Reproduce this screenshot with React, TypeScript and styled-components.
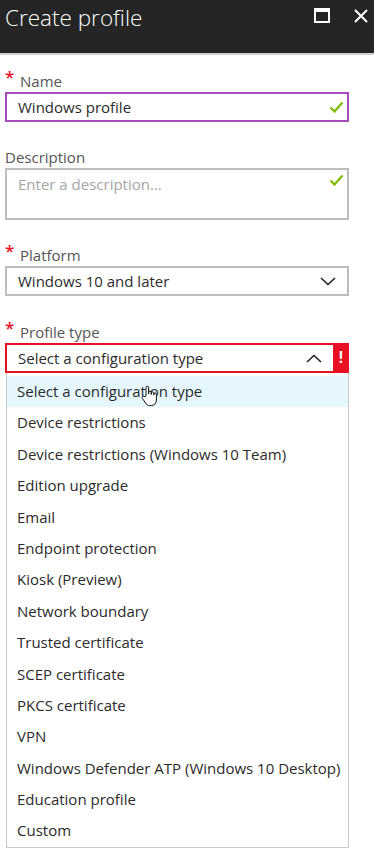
import React from "react";
import styled, { createGlobalStyle } from "styled-components";

const GlobalStyle = createGlobalStyle`
  html, body {
    margin: 0;
    padding: 0;
    background: #ffffff;
  }
  body {
    font-family: "Open Sans", "Liberation Sans", sans-serif;
    color: #333333;
  }
`;

const options = [
  "Select a configuration type",
  "Device restrictions",
  "Device restrictions (Windows 10 Team)",
  "Edition upgrade",
  "Email",
  "Endpoint protection",
  "Kiosk (Preview)",
  "Network boundary",
  "Trusted certificate",
  "SCEP certificate",
  "PKCS certificate",
  "VPN",
  "Windows Defender ATP (Windows 10 Desktop)",
  "Education profile",
  "Custom",
];

const CheckIcon = () => (
  <svg width="15" height="12" viewBox="0 0 15 12">
    <path d="M1.5 6.5 L5.5 10.5 L13.5 1.5" fill="none" stroke="#7fba00" strokeWidth="2.2" />
  </svg>
);

const Chevron = ({ up }: { up?: boolean }) => (
  <svg width="16" height="9" viewBox="0 0 16 9">
    <path
      d={up ? "M1 8 L8 1.5 L15 8" : "M1 1 L8 7.5 L15 1"}
      fill="none"
      stroke="#222"
      strokeWidth="1.6"
    />
  </svg>
);

const HandCursor = () => (
  <svg width="18" height="22" viewBox="0 0 18 22">
    <path
      d="M5 11 V2.5 a1.3 1.3 0 0 1 2.6 0 V9 V7.5 a1.3 1.3 0 0 1 2.6 0 V9.5 V8.3 a1.3 1.3 0 0 1 2.6 0 V10 V9.3 a1.3 1.3 0 0 1 2.6 0 V15 c0 3 -2 5.5 -5 5.5 H8.5 c-2 0 -3 -1 -4 -2.5 L1.3 13.2 a1.3 1.3 0 0 1 2 -1.6 Z"
      fill="#fff"
      stroke="#111"
      strokeWidth="1"
      strokeLinejoin="round"
    />
  </svg>
);

const App = () => {
  return (
    <>
      <GlobalStyle />
      <Header>
        <Title>Create profile</Title>
        <HeaderIcons>
          <MaximizeIcon />
          <svg width="14" height="14" viewBox="0 0 14 14">
            <path d="M1 1 L13 13 M13 1 L1 13" stroke="#fff" strokeWidth="2" />
          </svg>
        </HeaderIcons>
      </Header>
      <Body>
        <Field $gap={13}>
          <Label $required>
            <Star>*</Star>Name
          </Label>
          <TextBox $focused>
            <Value>Windows profile</Value>
            <CheckIcon />
          </TextBox>
        </Field>
        <Field>
          <Label>Description</Label>
          <TextArea>
            <Placeholder>Enter a description...</Placeholder>
            <CheckIcon />
          </TextArea>
        </Field>
        <Field>
          <Label $required>
            <Star>*</Star>Platform
          </Label>
          <TextBox>
            <Value>Windows 10 and later</Value>
            <ChevronWrap>
              <Chevron />
            </ChevronWrap>
          </TextBox>
        </Field>
        <Field $gap={23}>
          <Label $required>
            <Star>*</Star>Profile type
          </Label>
          <ErrorSelect>
            <ErrorInner>
              <Value>Select a configuration type</Value>
              <ChevronWrap>
                <Chevron up />
              </ChevronWrap>
            </ErrorInner>
            <ErrorBadge>!</ErrorBadge>
          </ErrorSelect>
          <DropList>
            {options.map((o, i) => (
              <Option key={o} $hover={i === 0}>
                {o}
                {i === 0 && (
                  <CursorSpot>
                    <HandCursor />
                  </CursorSpot>
                )}
              </Option>
            ))}
          </DropList>
        </Field>
      </Body>
    </>
  );
};

const Header = styled.header`
  display: flex;
  align-items: flex-start;
  justify-content: space-between;
  height: 53px;
  background-color: #252525;
  border-bottom: 2px solid #cfcfcf;
  padding: 0 5px 0 5px;
`;

const Title = styled.h1`
  margin: 0;
  font-family: "Open Sans", "Liberation Sans", sans-serif;
  font-weight: 300;
  font-size: 22.5px;
  line-height: 35px;
  color: #ffffff;
`;

const HeaderIcons = styled.div`
  display: flex;
  align-items: center;
  gap: 24px;
  padding-top: 8px;
  padding-right: 1px;
`;

const MaximizeIcon = styled.span`
  display: block;
  width: 12px;
  height: 9px;
  border: 2px solid #ffffff;
  border-top-width: 4px;
`;

const Body = styled.div`
  width: 344px;
  padding-left: 5px;
`;

const Field = styled.div<{ $gap?: number }>`
  display: flex;
  flex-direction: column;
  margin-top: ${(p) => p.$gap ?? 22}px;
`;

const Label = styled.div<{ $required?: boolean }>`
  position: relative;
  height: 22px;
  line-height: 22px;
  padding-top: 2px;
  padding-left: ${(p) => (p.$required ? "15px" : "0")};
  font-size: 15px;
  color: #555555;
`;

const Star = styled.span`
  position: absolute;
  left: 0;
  top: -2px;
  font-size: 17px;
  font-weight: 600;
  color: #e81123;
`;

const TextBox = styled.div<{ $focused?: boolean }>`
  box-sizing: border-box;
  display: flex;
  align-items: center;
  justify-content: space-between;
  height: 30px;
  padding: 0 3px 0 11px;
  border: ${(p) => (p.$focused ? "2px solid #a54cbd" : "2px solid #bdbdbd")};
`;

const TextArea = styled.div`
  box-sizing: border-box;
  display: flex;
  align-items: flex-start;
  justify-content: space-between;
  height: 52px;
  padding: 4px 3px 0 11px;
  border: 2px solid #bdbdbd;
`;

const Value = styled.span`
  font-size: 15px;
  line-height: 20px;
  color: #2b2b2b;
`;

const Placeholder = styled.span`
  font-size: 15px;
  line-height: 20px;
  color: #a6a6a6;
`;

const ChevronWrap = styled.span`
  display: flex;
  padding-right: 8px;
`;

const ErrorSelect = styled.div`
  display: flex;
  height: 30px;
`;

const ErrorInner = styled.div`
  box-sizing: border-box;
  flex: 1;
  display: flex;
  align-items: center;
  justify-content: space-between;
  padding: 0 3px 0 11px;
  border: 2px solid #e81123;
  border-right: none;
`;

const ErrorBadge = styled.div`
  width: 16px;
  display: flex;
  align-items: center;
  justify-content: center;
  background: #e81123;
  color: #ffffff;
  font-family: "Liberation Sans", sans-serif;
  font-weight: 700;
  font-size: 16px;
`;

const DropList = styled.div`
  box-sizing: border-box;
  margin-left: 1px;
  padding-top: 3px;
  height: 475px;
  border: 1px solid #c8c8c8;
  border-top: none;
`;

const Option = styled.div<{ $hover?: boolean }>`
  position: relative;
  height: 31.4px;
  line-height: 31.4px;
  padding-left: 10px;
  font-size: 15px;
  color: #2b2b2b;
  white-space: nowrap;
  background: ${(p) => (p.$hover ? "#e5f6fd" : "transparent")};
`;

const CursorSpot = styled.span`
  position: absolute;
  left: 134px;
  top: 9px;
  display: block;
  line-height: 0;
`;

export default App;
